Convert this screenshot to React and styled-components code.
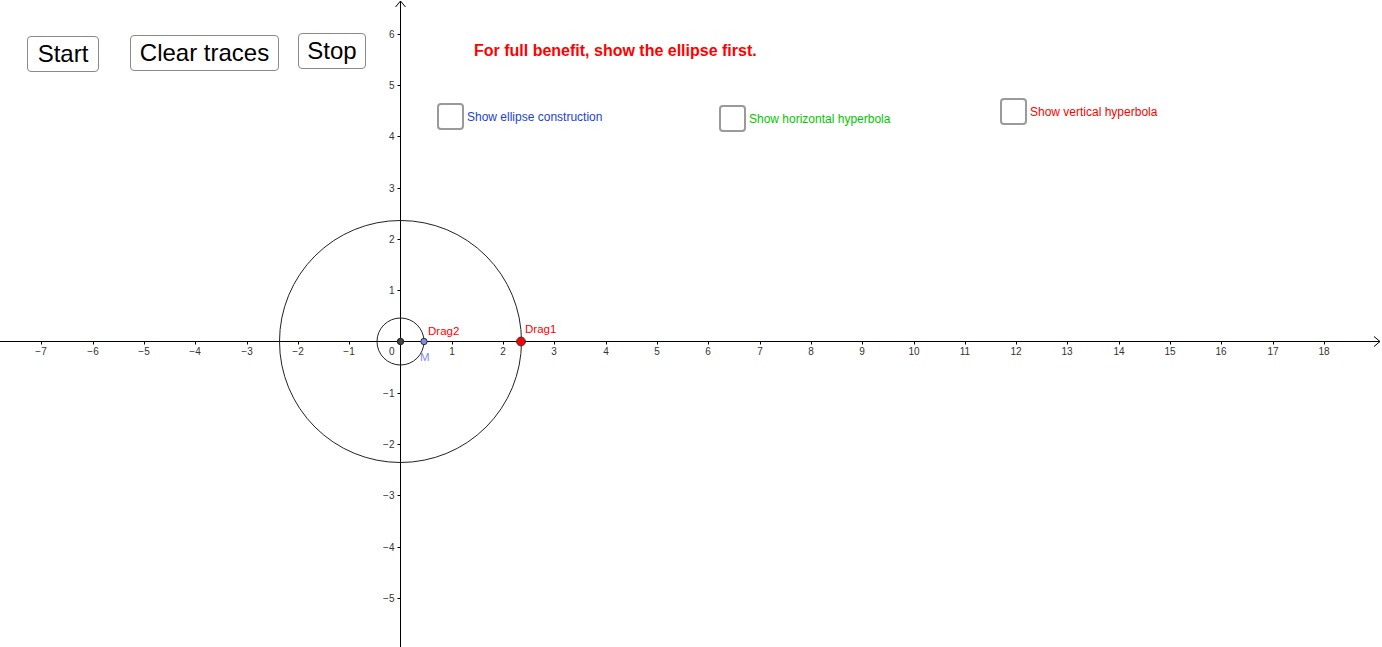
import React from "react";
import styled, { createGlobalStyle } from "styled-components";

const GlobalStyle = createGlobalStyle`
  html, body {
    margin: 0;
    padding: 0;
    background: #ffffff;
    font-family: "Liberation Sans", Arial, sans-serif;
  }
`;

const Applet = styled.div`
  position: relative;
  width: 1382px;
  height: 647px;
  overflow: hidden;
  background: #ffffff;
`;

const Canvas = styled.svg`
  display: block;
  width: 1382px;
  height: 647px;
`;

const Overlay = styled.div`
  position: absolute;
  left: ${(p) => p.$x}px;
  top: ${(p) => p.$y}px;
`;

const Button = styled.button`
  box-sizing: border-box;
  width: ${(p) => p.$w}px;
  height: ${(p) => p.$h}px;
  padding: 0;
  background: #ffffff;
  border: 1px solid #8a8a8a;
  border-radius: 4px;
  font-family: "Liberation Sans", Arial, sans-serif;
  font-size: 24px;
  color: #000000;
  cursor: pointer;
`;

const CheckRow = styled.label`
  display: flex;
  align-items: center;
  gap: 3px;
  cursor: pointer;
`;

const Box = styled.span`
  box-sizing: border-box;
  display: block;
  width: 27px;
  height: 27px;
  border: 2px solid #9a9a9a;
  border-radius: 4px;
  background: #ffffff;
`;

const CheckText = styled.span`
  font-size: 12px;
  color: ${(p) => p.$color};
  white-space: nowrap;
`;

const Notice = styled.div`
  font-size: 16px;
  font-weight: bold;
  color: #ff0000;
  white-space: nowrap;
`;

const UNIT = 51.3;
const OX = 400.5;
const OY = 341.5;

const xTicks = [];
for (let i = -7; i <= 18; i++) if (i !== 0) xTicks.push(i);
const yTicks = [];
for (let i = -5; i <= 6; i++) if (i !== 0) yTicks.push(i);

const fmt = (n) => (n < 0 ? "\u2212" + Math.abs(n) : String(n));

const Checkbox = ({ x, y, color, children }) => (
  <Overlay $x={x} $y={y}>
    <CheckRow>
      <Box />
      <CheckText $color={color}>{children}</CheckText>
    </CheckRow>
  </Overlay>
);

const Plane = () => (
  <Canvas viewBox="0 0 1382 647">
    {/* axes */}
    <line x1="0" y1={OY} x2="1380" y2={OY} stroke="#000" strokeWidth="1" />
    <polyline points={`1374,${OY - 5} 1380,${OY} 1374,${OY + 5}`} fill="none" stroke="#000" strokeWidth="1" />
    <line x1={OX} y1="1" x2={OX} y2="647" stroke="#000" strokeWidth="1" />
    <polyline points={`${OX - 5},7 ${OX},1 ${OX + 5},7`} fill="none" stroke="#000" strokeWidth="1" />

    {xTicks.map((i) => {
      const x = Math.round(OX + i * UNIT) + 0.5;
      return (
        <g key={"x" + i}>
          <line x1={x} y1={OY} x2={x} y2={OY + 3} stroke="#000" strokeWidth="1" />
          <text x={x - 0.5} y={OY + 13.5} fontSize="10" fill="#333" textAnchor="middle" fontFamily="Liberation Sans, Arial, sans-serif">
            {fmt(i)}
          </text>
        </g>
      );
    })}
    {yTicks.map((i) => {
      const y = Math.round(OY - i * UNIT) + 0.5;
      return (
        <g key={"y" + i}>
          <line x1={OX - 3} y1={y} x2={OX} y2={y} stroke="#000" strokeWidth="1" />
          <text x={OX - 6} y={y + 3.5} fontSize="10" fill="#333" textAnchor="end" fontFamily="Liberation Sans, Arial, sans-serif">
            {fmt(i)}
          </text>
        </g>
      );
    })}
    <text x={OX - 6} y={OY + 13.5} fontSize="10" fill="#333" textAnchor="end" fontFamily="Liberation Sans, Arial, sans-serif">
      0
    </text>

    {/* circles */}
    <circle cx={OX} cy={OY} r="121" fill="none" stroke="#222" strokeWidth="1" />
    <circle cx={OX} cy={OY} r="23.5" fill="none" stroke="#222" strokeWidth="1" />

    {/* points */}
    <circle cx={OX} cy={OY} r="3.2" fill="#444" stroke="#222" strokeWidth="1" />
    <circle cx="424" cy={OY} r="3.2" fill="#7f8ce6" stroke="#333" strokeWidth="1" />
    <circle cx="521" cy={OY} r="4.4" fill="#ff0000" stroke="#333" strokeWidth="1" />

    {/* labels */}
    <text x="428" y="335" fontSize="11.5" fill="#ff0000" fontFamily="Liberation Sans, Arial, sans-serif">Drag2</text>
    <text x="525" y="333" fontSize="11.5" fill="#ff0000" fontFamily="Liberation Sans, Arial, sans-serif">Drag1</text>
    <text x="420" y="361" fontSize="11.5" fill="#7f8ce6" fontFamily="Liberation Sans, Arial, sans-serif">M</text>
  </Canvas>
);

const App = () => (
  <Applet>
    <GlobalStyle />
    <Plane />

    <Overlay $x={27} $y={36}>
      <Button $w={72} $h={36}>Start</Button>
    </Overlay>
    <Overlay $x={130} $y={35}>
      <Button $w={149} $h={36}>Clear traces</Button>
    </Overlay>
    <Overlay $x={298} $y={33}>
      <Button $w={68} $h={36}>Stop</Button>
    </Overlay>

    <Overlay $x={474} $y={42}>
      <Notice>For full benefit, show the ellipse first.</Notice>
    </Overlay>

    <Checkbox x={437} y={103} color="#1c3fd8">Show ellipse construction</Checkbox>
    <Checkbox x={719} y={105} color="#00c800">Show horizontal hyperbola</Checkbox>
    <Checkbox x={1000} y={98} color="#ff0000">Show vertical hyperbola</Checkbox>
  </Applet>
);

export default App;
